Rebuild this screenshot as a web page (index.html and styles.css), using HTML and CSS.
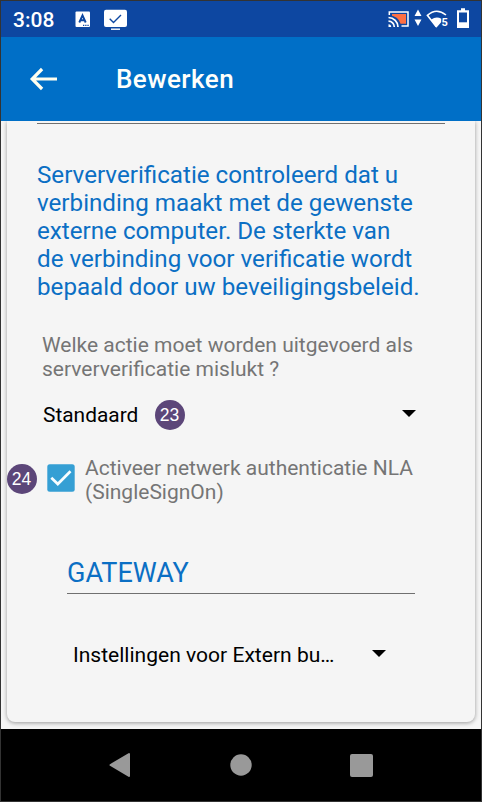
FILE: index.html
```html
<!DOCTYPE html>
<html lang="nl">
<head>
<meta charset="utf-8">
<title>Bewerken</title>
<link rel="stylesheet" href="styles.css">
</head>
<body>
<div class="screen">
  <header class="status">
    <span class="clock">3:08</span>
    <svg class="ic-keyboard" width="16" height="17" viewBox="0 0 16 17"><rect x=".5" y=".5" width="14.5" height="15.5" rx="1" fill="#fff"/><path d="M4.300 11.500 7.500 4.300l3.200 7.200M5.500 9.200h4" fill="none" stroke="#0d47a1" stroke-width="1.900"/><path d="M8 14.300h6" stroke="#0d47a1" stroke-width="1.300" stroke-dasharray="1.300 .9"/></svg>
    <svg class="ic-desktop" width="24" height="21" viewBox="0 0 24 21"><rect x="0" y=".8" width="23" height="17.200" rx="2" fill="#fff"/><path d="M7 20.200h9" stroke="#fff" stroke-width="1.400"/><path d="m5.700 9.800 3.800 3.800L17 6.100" fill="none" stroke="#0d47a1" stroke-width="1.400"/></svg>
    <span class="spacer"></span>
    <svg class="ic-cast" width="22" height="18" viewBox="0 0 22 18"><path d="M4 4h14v9.800h-5.500C11 9 8.500 7 4 5.700z" fill="#ff7043"/><path d="M1.300 5V2h18.700v14H13.500" fill="none" stroke="#fff" stroke-width="1.500"/><path d="M.5 7.500a9.500 9.500 0 0 1 9.500 9.500M.5 11.200a5.800 5.800 0 0 1 5.800 5.800" fill="none" stroke="#fff" stroke-width="1.700"/><path d="M.5 14.300a2.700 2.700 0 0 1 2.700 2.700H.5z" fill="#fff"/></svg>
    <svg class="ic-data" width="8" height="18" viewBox="0 0 8 18"><path d="M4 .5 7.500 7h-7zM4 17 .5 10.500h7z" fill="#fff"/></svg>
    <svg class="ic-wifi" width="24" height="20" viewBox="0 0 24 20"><path d="M10.300 17.800 1.400 6.300Q10.500-1.700 20 6" fill="none" stroke="#fff" stroke-width="1.600"/><path d="M5.200 10.500Q10.300 7 15.400 9.800V13l-5.100 5.800z" fill="#fff"/><text class="wifi-number" x="15.600" y="17">5</text></svg>
    <svg class="ic-battery" width="12" height="20" viewBox="0 0 12 20"><path d="M4 .3h4v2h4V20H0V2.300h4z" fill="#fff"/><path d="M2 4.500h8v9.800H2z" fill="#0d47a1"/></svg>
  </header>
  <div class="appbar">
    <svg class="back" width="28" height="24" viewBox="0 0 28 24"><path d="M28 12H3.500M13.100 2 3.200 12l9.900 10" fill="none" stroke="#fffff0" stroke-width="3.200"/></svg>
    <h1 class="title">Bewerken</h1>
  </div>
  <main class="content">
    <section class="card">
      <div class="rule"></div>
      <p class="intro">Serververificatie controleerd dat u<br>verbinding maakt met de gewenste<br>externe computer. De sterkte van<br>de verbinding voor verificatie wordt<br>bepaald door uw beveiligingsbeleid.</p>
      <p class="question">Welke actie moet worden uitgevoerd als<br>serververificatie mislukt ?</p>
      <div class="select">
        <span class="value standard">Standaard</span>
        <span class="badge">23</span>
        <svg class="caret" width="14" height="7" viewBox="0 0 14 7"><path d="M0 0h14L7 7z"/></svg>
      </div>
      <div class="check-row">
        <span class="badge badge-check">24</span>
        <svg class="checkbox" width="28" height="28" viewBox="0 0 28 28"><rect x=".3" y=".3" width="27.400" height="27.400" rx="2.500" fill="#359fd4"/><path d="m4.300 13.700 6.500 6.300L23.500 7.200" fill="none" stroke="#f8fdff" stroke-width="2.700"/></svg>
        <p class="check-label">Activeer netwerk authenticatie NLA<br>(SingleSignOn)</p>
      </div>
      <div class="gateway">
        <h2 class="heading">GATEWAY</h2>
        <div class="select gateway-select">
          <span class="value gateway-value">Instellingen voor Extern bu…</span>
          <svg class="caret" width="14" height="7" viewBox="0 0 14 7"><path d="M0 0h14L7 7z"/></svg>
        </div>
      </div>
    </section>
  </main>
  <nav class="navbar">
    <svg width="22" height="26" viewBox="0 0 22 26"><path d="M20 2v22L1.500 13z" fill="#999" stroke="#999" stroke-width="2" stroke-linejoin="round"/></svg>
    <svg width="22" height="22" viewBox="0 0 22 22"><circle cx="11" cy="11" r="10.700" fill="#999"/></svg>
    <svg width="23" height="23" viewBox="0 0 23 23"><rect width="23" height="23" rx="2" fill="#999"/></svg>
  </nav>
</div>
</body>
</html>
```
FILE: styles.css
```css
* { box-sizing: border-box; margin: 0; padding: 0; }
body { width: 482px; height: 802px; overflow: hidden; font-family: Roboto, "Liberation Sans", sans-serif; background: #333; }
svg { display: block; flex: none; }
.screen { width: 482px; height: 802px; border: 1px solid #333; display: flex; flex-direction: column; background: #f5f5f5; }
.status { height: 36px; flex: none; background: #0d47a1; display: flex; align-items: flex-start; padding: 0 12px; color: #fff; }
.clock { font-size: 21px; font-weight: 500; line-height: 24px; margin-top: 7px; width: 42px; white-space: nowrap; }
.ic-keyboard { margin: 10px 0 0 20px; }
.ic-desktop { margin: 8px 0 0 13px; }
.spacer { flex: 1; }
.ic-cast { margin-top: 9px; }
.ic-data { margin: 8px 0 0 4px; }
.ic-wifi { margin: 8px 0 0 4px; }
.ic-battery { margin: 7px 0 0 7px; }
.wifi-number { font: 700 11px Roboto, sans-serif; fill: #fff; stroke: #0d47a1; stroke-width: 2px; paint-order: stroke; }
.appbar { height: 84px; flex: none; background: #006fc7; display: flex; align-items: center; padding-left: 28px; }
.title { margin-left: 59px; color: #fffffb; font-size: 26px; font-weight: 500; line-height: 30px; letter-spacing: .45px; }
.content { height: 608px; flex: none; padding: 0 6px 7px; overflow: hidden; }
.card { height: 601px; background: #f5f5f5; border-radius: 0 0 8px 8px; box-shadow: 0 1px 4px rgba(0,0,0,.38); padding: 2px 30px 0; }
.rule { height: 1px; background: #707070; }
.intro { margin-top: 37px; color: #0b6fc4; font-size: 24.18px; line-height: 28px; white-space: nowrap; }
.question, .check-label { color: #757575; font-size: 21px; line-height: 24px; white-space: nowrap; }
.question { margin: 32px 0 0 5px; }
.select { display: flex; align-items: center; color: #000; }
.card > .select { height: 30px; margin: 19px 29px 0 6px; }
.value { font-size: 21px; line-height: 24px; white-space: nowrap; }
.standard { width: 111.5px; font-size: 20.9px; }
.gateway-value { font-size: 21.05px; }
.caret { margin-left: auto; margin-bottom: 3px; }
.badge { width: 30px; height: 30px; border-radius: 50%; background: #5c4679; color: #fff; font: 17.5px/30px "Liberation Sans", sans-serif; text-align: center; flex: none; }
.check-row { display: flex; margin: 26px 0 0 -30.500px; height: 48px; }
.badge-check { margin-top: 8px; }
.checkbox { margin: 8px 0 0 10.500px; }
.check-label { margin-left: 10px; }
.gateway { margin: 54px 30px 0; }
.heading { height: 36px; padding-top: 1px; border-bottom: 1px solid #707070; color: #0b6fc4; font-size: 27px; font-weight: 400; line-height: 28px; }
.gateway-select { height: 30px; margin: 46px 29px 0 6px; }
.navbar { height: 72px; flex: none; background: #000; display: flex; align-items: center; justify-content: space-between; padding: 0 108px; }
```
